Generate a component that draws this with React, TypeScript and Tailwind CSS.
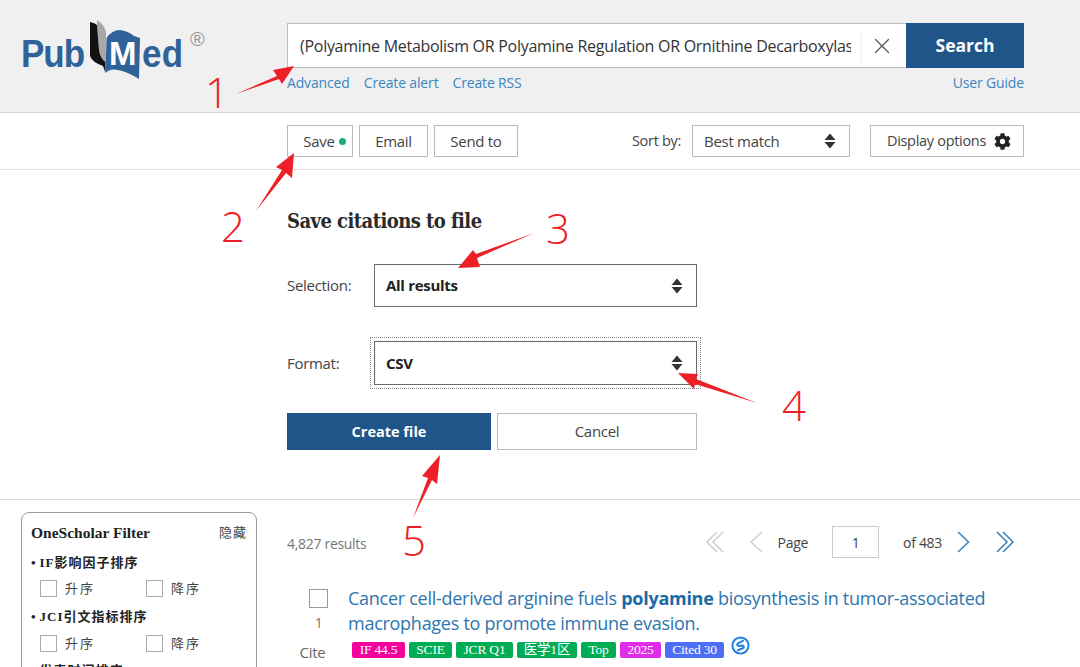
import React from 'react';
import { X } from 'lucide-react';
import { FaCog } from 'react-icons/fa';

const sans = { fontFamily: '"Open Sans", "Noto Sans CJK SC", sans-serif' };

function SortIcon({ className = '' }: { className?: string }) {
  return (
    <svg viewBox="0 0 12 16" className={'w-3 h-4 ' + className}>
      <path d="M6 0.5 L11.5 7 H0.5 Z M6 15.5 L11.5 9 H0.5 Z" fill="#333" />
    </svg>
  );
}

function Logo() {
  const word = "absolute top-[20px] text-[35px] leading-none text-[#2f6299] font-bold scale-y-[1.12] origin-bottom";
  return (
    <div className="relative h-[65px] w-[190px] mt-[-5px] font-['Liberation_Sans',sans-serif]">
      <span className={word + ' left-[1px] tracking-[-1px]'}>Pub</span>
      <svg viewBox="85 18 60 65" className="absolute left-[65px] top-0 w-[60px] h-[65px]">
        <path d="M97 20 Q104 24 106 32 L106 62 Q100 58 99 50 L97 25 Z" fill="#a8a8a8" />
        <path d="M90 22 Q95 23 97 25 L99 50 Q100 58 105.500 62 L105.500 73 L103 66 Q92 62 90 56 Z" fill="#111" />
        <path d="M106.500 38 Q112 30 120 30 Q128 31 134 36 L140 38 L139 79 Q128 72 118 70 Q110 68 105.500 73 Z" fill="#2f6299" />
      </svg>
      <span className="absolute left-[89px] top-[19px] text-[33px] leading-none font-bold text-white tracking-normal">M</span>
      <span className={word + ' left-[122px] tracking-[0.4px]'}>ed</span>
      <span className="absolute left-[170px] top-[11px] text-[20px] leading-none text-[#999] tracking-normal">®</span>
    </div>
  );
}

function SingleChevron({ dir, color }: { dir: 'left' | 'right'; color: string }) {
  return (
    <svg viewBox="0 0 14 24" className="w-[14px] h-[24px]">
      <path d={dir === 'left' ? 'M13 2 L2 12 L13 22' : 'M2 2 L12.500 12 L2 22'} fill="none" stroke={color} strokeWidth="1.6" />
    </svg>
  );
}

function DoubleChevron({ dir, color }: { dir: 'left' | 'right'; color: string }) {
  return (
    <svg viewBox="0 0 20 24" className="w-[20px] h-[24px]">
      <g transform={dir === 'left' ? 'translate(20,0) scale(-1,1)' : undefined} fill="none" stroke={color} strokeWidth="1.6">
        <path d="M2 2 L12 12 L2 22" />
        <path d="M8 2 L18 12 L8 22" />
      </g>
    </svg>
  );
}

function SelectBox({ value, h }: { value: string; h: string }) {
  return (
    <div className={'flex items-center justify-between w-[323px] border border-[#6b6b6b] pl-[11px] pr-[13px] bg-white text-[#212121] font-bold text-[15px] ' + h}>
      {value}
      <SortIcon />
    </div>
  );
}

function Toolbtn({ children, w }: { children: React.ReactNode; w: string }) {
  return <div className={'flex items-center justify-center h-[32px] border border-[#bbb] text-[#444] text-[15px] ' + w}>{children}</div>;
}

function Badge({ bg, w, children }: { bg: string; w: string; children: React.ReactNode }) {
  return (
    <span className={'flex items-center justify-center h-[16px] rounded-[2px] text-white text-[13.5px] tracking-[-0.2px] font-["Liberation_Serif","Noto_Sans_CJK_SC",serif] ' + bg + ' ' + w}>{children}</span>
  );
}

function FilterRow({ className = '' }: { className?: string }) {
  return (
    <div className={"flex text-[13px] text-[#444] h-[18px] items-center pl-[9px] tracking-[2px] " + className}>
      <span className="w-[17px] h-[17px] border border-[#aaa]"></span>
      <span className="ml-[8px] w-[81px]">升序</span>
      <span className="w-[17px] h-[17px] border border-[#aaa]"></span>
      <span className="ml-[8px]">降序</span>
    </div>
  );
}

function FilterHeading({ children, className = '' }: { children: React.ReactNode; className?: string }) {
  return (
    <div className={"font-bold text-[13px] text-[#222] tracking-[1px] leading-[20px] " + className}>
      <span className="mr-[3px]">•</span>{children}
    </div>
  );
}

function Annotations() {
  const digit = "absolute text-[#ee2027] text-[42px] leading-none font-[350]";
  return (
    <div className="absolute inset-0 pointer-events-none">
      <svg className="absolute inset-0" width="1080" height="667">
        <g fill="#ee2027">
          <path d="M236 94 L277 76 L273 70 L294 66 L282 84 L279 79 Z" />
          <path d="M256 211 L282 170 L276 167 L294 153 L292 178 L286 173 Z" />
          <path d="M534 233 L477 258 L480 267 L458 268 L473 250 L476 254 Z" />
          <path d="M757 403 L696 379 L698 374 L678 373 L694 389 L695 384 Z" />
          <path d="M413 518 L428 478 L422 476 L440 455 L437 484 L432 480 Z" />
        </g>
      </svg>
      <span className={digit + ' left-[205px] top-[71px]'}>1</span>
      <span className={digit + ' left-[221px] top-[205px]'}>2</span>
      <span className={digit + ' left-[546px] top-[207px]'}>3</span>
      <span className={digit + ' left-[782px] top-[384px]'}>4</span>
      <span className={digit + ' left-[402px] top-[519px]'}>5</span>
    </div>
  );
}

export default function App() {
  return (
    <div className="relative w-[1080px] h-[667px] overflow-hidden bg-white tracking-[-0.3px]" style={sans}>
      {/* search header */}
      <div className="flex h-[113px] bg-[#f0f0f0] border-b border-[#d6d6d6] pt-[23px]">
        <div className="w-[287px] pl-[20px]"><Logo /></div>
        <div className="w-[737px]">
          <div className="flex h-[45px]">
            <div className="flex flex-1 items-center bg-white border border-[#bbb] border-r-0">
              <div className="w-[551px] ml-[12px] pt-[1px] overflow-hidden whitespace-nowrap text-[16px] tracking-[-0.28px] text-[#333]">(Polyamine Metabolism OR Polyamine Regulation OR Ornithine Decarboxylase</div>
              <div className="w-px h-[36px] bg-[#f2f2f2] ml-[10px]"></div>
              <X className="w-[26px] h-[26px] ml-[7px] text-[#555]" strokeWidth={1.2} />
            </div>
            <div className="flex items-center justify-center w-[118px] bg-[#20558a] text-white font-bold text-[17.5px] tracking-normal">Search</div>
          </div>
          <div className="flex mt-[4px] text-[14px] text-[#3a86c0] tracking-[-0.15px]">
            <span>Advanced</span>
            <span className="ml-[14px]">Create alert</span>
            <span className="ml-[14px]">Create RSS</span>
            <span className="ml-auto">User Guide</span>
          </div>
        </div>
      </div>

      {/* toolbar */}
      <div className="flex items-center h-[57px] border-b border-[#e0e0e0] pl-[287px] pr-[56px]">
        <Toolbtn w="w-[66px]">
          <span className="ml-[9px]">Save</span>
          <span className="w-[7px] h-[7px] rounded-full bg-[#20aa7c] ml-[4px]"></span>
        </Toolbtn>
        <div className="w-[6px]"></div>
        <Toolbtn w="w-[69px]">Email</Toolbtn>
        <div className="w-[6px]"></div>
        <Toolbtn w="w-[84px]">Send to</Toolbtn>
        <span className="ml-[114px] text-[14.500px] text-[#444] whitespace-nowrap">Sort by:</span>
        <div className="flex items-center justify-between ml-[11px] w-[158px] h-[32px] border border-[#bbb] pl-[11px] pr-[13px] text-[15px] text-[#444]">
          Best match
          <SortIcon />
        </div>
        <div className="flex items-center justify-center ml-[20px] w-[154px] h-[32px] border border-[#bbb] text-[14.500px] text-[#444]">
          <span className="ml-[4px]">Display options</span>
          <FaCog className="w-[17px] h-[17px] ml-[8px] text-[#222]" />
        </div>
      </div>

      {/* save citations panel */}
      <div className="h-[330px] border-b border-[#dcdcdc] pl-[287px] pt-[38px]">
        <h2 className="text-[20px] leading-[26px] font-bold text-[#2a2a2a] font-['DejaVu_Serif_Condensed','DejaVu_Serif',serif] tracking-[-0.55px]">Save citations to file</h2>
        <div className="flex items-center mt-[30px] w-[410px] justify-between">
          <span className="text-[15px] text-[#444]">Selection:</span>
          <SelectBox value="All results" h="h-[43px]" />
        </div>
        <div className="flex items-center mt-[34px] w-[410px] justify-between">
          <span className="text-[15px] text-[#444]">Format:</span>
          <div className="outline-1 outline-dotted outline-[#888] outline-offset-[3px]">
            <SelectBox value="CSV" h="h-[44px]" />
          </div>
        </div>
        <div className="flex mt-[28px] gap-[6px]">
          <div className="flex items-center justify-center w-[204px] h-[37px] bg-[#20558a] text-white font-bold text-[14.500px] tracking-normal">Create file</div>
          <div className="flex items-center justify-center w-[200px] h-[37px] border border-[#bbb] text-[15px] text-[#444]">Cancel</div>
        </div>
      </div>

      {/* results */}
      <div className="flex pl-[21px] pt-[12px]">
        <div className="w-[236px] h-[200px] shrink-0 border border-[#999] rounded-[8px] px-[9px] pt-[8px] font-['Liberation_Serif','Noto_Sans_CJK_SC',serif]">
          <div className="flex justify-between items-center tracking-normal">
            <span className="font-bold text-[15.500px] text-[#222]">OneScholar Filter</span>
            <span className="text-[13px] text-[#444] tracking-[1px]">隐藏</span>
          </div>
          <FilterHeading className="mt-[9px]">IF影响因子排序</FilterHeading>
          <FilterRow className="mt-[6px]" />
          <FilterHeading className="mt-[10px]">JCI引文指标排序</FilterHeading>
          <FilterRow className="mt-[7px]" />
          <FilterHeading className="mt-[9px]">发表时间排序</FilterHeading>
        </div>
        <div className="w-[737px] ml-[30px]">
          <div className="flex items-center h-[32px] mt-[14px] text-[14px] text-[#777]">
            <span className="mt-[3px]">4,827 results</span>
            <div className="flex items-center ml-auto text-[#444]">
              <DoubleChevron dir="left" color="#cfcfcf" />
              <span className="ml-[24px]"><SingleChevron dir="left" color="#cfcfcf" /></span>
              <span className="ml-[15px]">Page</span>
              <span className="flex items-center justify-center ml-[24px] w-[47px] h-[32px] border border-[#ccc]">1</span>
              <span className="ml-[24px]">of 483</span>
              <span className="ml-[14px]"><SingleChevron dir="right" color="#3a86c0" /></span>
              <span className="ml-[25px] mr-[9px]"><DoubleChevron dir="right" color="#3a86c0" /></span>
            </div>
          </div>
          <div className="flex mt-[28px]">
            <div className="flex flex-col items-center w-[61px] shrink-0 text-[#777] text-[14px]">
              <span className="w-[19px] h-[19px] border border-[#999] mt-[3px] ml-[2px]"></span>
              <span className="mt-[6px] ml-[2px] leading-[18px]">1</span>
              <span className="mt-[10px] ml-[-10px] text-[15px] leading-[20px] text-[#666]">Cite</span>
            </div>
            <div className="flex-1">
              <div className="text-[18px] leading-[25px] text-[#2e75ad] tracking-[-0.27px]">
                Cancer cell-derived arginine fuels <b className="text-[#1a6aa6]">polyamine</b> biosynthesis in tumor-associated macrophages to promote immune evasion.
              </div>
              <div className="flex items-start gap-[4px] mt-[6px] ml-[4px]">
                <Badge bg="bg-[#f5009b]" w="w-[53px]">IF 44.5</Badge>
                <Badge bg="bg-[#00ad55]" w="w-[43px]">SCIE</Badge>
                <Badge bg="bg-[#00ad55]" w="w-[57px]">JCR Q1</Badge>
                <Badge bg="bg-[#00ad55]" w="w-[60px]">医学1区</Badge>
                <Badge bg="bg-[#00ad55]" w="w-[35px]">Top</Badge>
                <Badge bg="bg-[#e02be8]" w="w-[41px]">2025</Badge>
                <Badge bg="bg-[#4d6ff5]" w="w-[59px]">Cited 30</Badge>
                <svg viewBox="0 0 20 20" className="w-[19px] h-[19px] mt-[-6px] ml-[3px]">
                  <circle cx="10" cy="10" r="8.500" fill="none" stroke="#1a7fe0" strokeWidth="2" />
                  <path d="M13.500 4.500 L7 8 Q5.500 9.500 8 10.500 L12 10 Q14.500 11 13 12.500 L6.500 15.500" fill="none" stroke="#1a7fe0" strokeWidth="2" />
                </svg>
              </div>
            </div>
          </div>
        </div>
      </div>

      <Annotations />
    </div>
  );
}
